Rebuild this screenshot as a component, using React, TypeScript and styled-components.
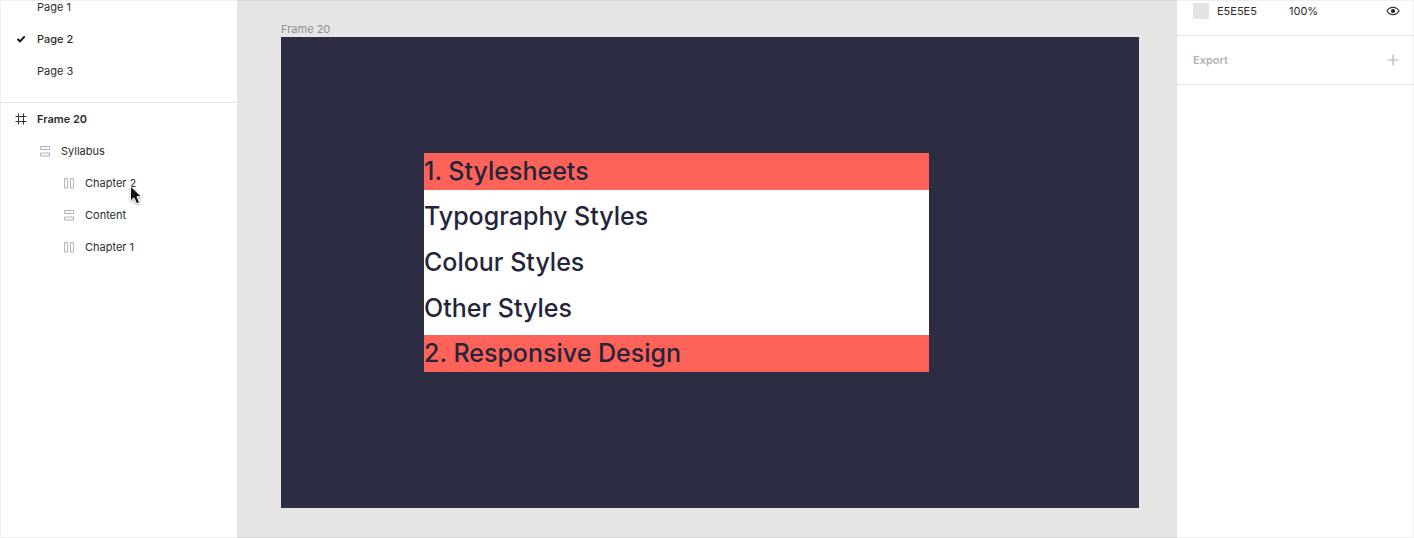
import React from "react";
import styled, { createGlobalStyle } from "styled-components";

const GlobalStyle = createGlobalStyle`
  *, *::before, *::after { box-sizing: border-box; }
  body { margin: 0; background: #fff; color: #2c2c2c; font-family: Inter, "Liberation Sans", sans-serif; font-size: 11px; }
  button, input { font: inherit; color: inherit; }
`;

const Editor = styled.div`
  display: grid;
  grid-template-columns: 238px minmax(0, 1fr) 237px;
  min-height: 100vh;
  overflow: hidden;

  &::after {
    content: "";
    position: fixed;
    inset: 0;
    border: 1px solid rgba(0, 0, 0, 0.06);
    pointer-events: none;
  }
`;

const Sidebar = styled.aside`
  background: #fff;
  min-width: 0;
  overflow: hidden;
`;

const LeftSidebar = styled(Sidebar)`
  border-right: 1px solid #e5e5e5;
`;

const PageList = styled.ul`
  list-style: none;
  margin: -9px 0 0;
  padding: 0 0 15px;
  border-bottom: 1px solid #e5e5e5;
`;

const LayerList = styled.ul`
  list-style: none;
  margin: 0;
  padding: 0;
`;

const ListItem = styled.li`
  position: relative;
`;

const RowButton = styled.button<{ $depth?: number; $weight?: number }>`
  display: flex;
  align-items: center;
  gap: 8px;
  width: 100%;
  height: 32px;
  border: 0;
  padding: 0 8px 0 ${(p) => 13 + (p.$depth ?? 0) * 24}px;
  background: none;
  text-align: left;
  line-height: 16px;
  font-weight: ${(p) => p.$weight ?? 400};
`;

const IconSlot = styled.span`
  display: flex;
  flex: none;
  width: 16px;
  height: 16px;
`;

const Pointer = styled.svg`
  position: absolute;
  left: 128px;
  top: 18px;
  pointer-events: none;
  filter: drop-shadow(0 1px 1px rgba(0, 0, 0, 0.35));
`;

const Canvas = styled.main`
  display: flex;
  flex-direction: column;
  padding: 21px 38px 30px 43px;
  background: #e5e5e5;
`;

const FrameLabel = styled.div`
  height: 16px;
  line-height: 16px;
  color: #8e8e8e;
`;

const Frame = styled.section`
  flex: 1;
  padding: 116px 210px 136px 143px;
  background: #2c2d43;
`;

const Syllabus = styled.div`
  background: #fff;
  color: #24253a;
  font-size: 25px;
  font-weight: 500;
`;

const Chapter = styled.h2`
  height: 37px;
  margin: 0;
  background: #ff6259;
  font: inherit;
  line-height: 36px;
  white-space: nowrap;
`;

const Content = styled.ul`
  list-style: none;
  margin: 0;
  padding: 3px 0 4px;
`;

const Topic = styled.li`
  line-height: 46px;
  white-space: nowrap;
`;

const FillRow = styled.div`
  display: flex;
  align-items: center;
  height: 36px;
  padding: 0 13px 14px 16px;
  border-bottom: 1px solid #e5e5e5;
`;

const Swatch = styled.button`
  width: 16px;
  height: 16px;
  margin-right: 8px;
  padding: 0;
  border: 0;
  background: #e3e3e3;
`;

const ValueInput = styled.input`
  width: 72px;
  height: 16px;
  padding: 0;
  border: 0;
  background: none;
`;

const IconButton = styled.button`
  display: flex;
  width: 16px;
  height: 16px;
  margin-left: auto;
  padding: 0;
  border: 0;
  background: none;
`;

const ExportRow = styled.div`
  display: flex;
  align-items: center;
  height: 49px;
  padding: 0 13px 0 16px;
  border-bottom: 1px solid #e5e5e5;
`;

const SectionTitle = styled.h2`
  margin: 0;
  color: #b3b3b3;
  font-size: 11px;
  line-height: 16px;
  font-weight: 600;
`;

type IconKind = "check" | "frame" | "rows" | "columns" | "eye" | "plus";

const Icon = ({ kind }: { kind: IconKind }) => (
  <svg width="16" height="16" viewBox="0 0 16 16" fill="none" aria-hidden="true">
    {kind === "check" && <path d="M4.5 8 7 10.300 11.700 5.300" stroke="#111" strokeWidth="1.900" />}
    {kind === "frame" && <path d="M5.5 2.5v11M10.5 2.5v11M2.5 5.5h11M2.5 10.5h11" stroke="#333" />}
    {kind === "rows" && <path d="M3.5 3.5h9v3h-9zM3.5 10h9v3h-9z" stroke="#b3b3b3" />}
    {kind === "columns" && <path d="M3.5 3.5h3v9.500h-3zM9.5 3.5h3v9.500h-3z" stroke="#b3b3b3" />}
    {kind === "eye" && (
      <>
        <path d="M2 8c1.400-2.400 3.500-3.600 6-3.600s4.600 1.200 6 3.600c-1.400 2.400-3.500 3.600-6 3.600S3.400 10.400 2 8z" stroke="#333" strokeWidth="1.200" />
        <circle cx="8" cy="8" r="2.100" fill="#222" />
      </>
    )}
    {kind === "plus" && <path d="M8 2.500v11M2.500 8h11" stroke="#b3b3b3" strokeWidth="1.200" />}
  </svg>
);

const pages = ["Page 1", "Page 2", "Page 3"];

const layers: { name: string; kind: IconKind; depth: number; weight?: number; hovered?: boolean }[] = [
  { name: "Frame 20", kind: "frame", depth: 0, weight: 600 },
  { name: "Syllabus", kind: "rows", depth: 1 },
  { name: "Chapter 2", kind: "columns", depth: 2, hovered: true },
  { name: "Content", kind: "rows", depth: 2 },
  { name: "Chapter 1", kind: "columns", depth: 2 },
];

const topics = ["Typography Styles", "Colour Styles", "Other Styles"];

export default function App() {
  return (
    <>
      <GlobalStyle />
      <Editor>
        <LeftSidebar>
          <PageList>
            {pages.map((page) => {
              const current = page === "Page 2";
              return (
                <ListItem key={page}>
                  <RowButton type="button" $weight={current ? 500 : 400}>
                    <IconSlot>{current && <Icon kind="check" />}</IconSlot>
                    {page}
                  </RowButton>
                </ListItem>
              );
            })}
          </PageList>
          <LayerList>
            {layers.map((layer) => (
              <ListItem key={layer.name}>
                <RowButton type="button" $depth={layer.depth} $weight={layer.weight}>
                  <IconSlot>
                    <Icon kind={layer.kind} />
                  </IconSlot>
                  {layer.name}
                </RowButton>
                {layer.hovered && (
                  <Pointer width="16" height="22" viewBox="0 0 16 22" aria-hidden="true">
                    <path d="M2.500 1v15l3.500-3.200 2.600 6 3-1.300-2.600-5.800h4.500z" fill="#111" stroke="#fff" />
                  </Pointer>
                )}
              </ListItem>
            ))}
          </LayerList>
        </LeftSidebar>
        <Canvas>
          <FrameLabel>Frame 20</FrameLabel>
          <Frame>
            <Syllabus>
              <Chapter>1. Stylesheets</Chapter>
              <Content>
                {topics.map((topic) => (
                  <Topic key={topic}>{topic}</Topic>
                ))}
              </Content>
              <Chapter>2. Responsive Design</Chapter>
            </Syllabus>
          </Frame>
        </Canvas>
        <Sidebar>
          <FillRow>
            <Swatch type="button" aria-label="Fill colour" />
            <ValueInput aria-label="Hex value" defaultValue="E5E5E5" />
            <ValueInput aria-label="Opacity" defaultValue="100%" />
            <IconButton type="button" aria-label="Toggle visibility">
              <Icon kind="eye" />
            </IconButton>
          </FillRow>
          <ExportRow>
            <SectionTitle>Export</SectionTitle>
            <IconButton type="button" aria-label="Add export">
              <Icon kind="plus" />
            </IconButton>
          </ExportRow>
        </Sidebar>
      </Editor>
    </>
  );
}
